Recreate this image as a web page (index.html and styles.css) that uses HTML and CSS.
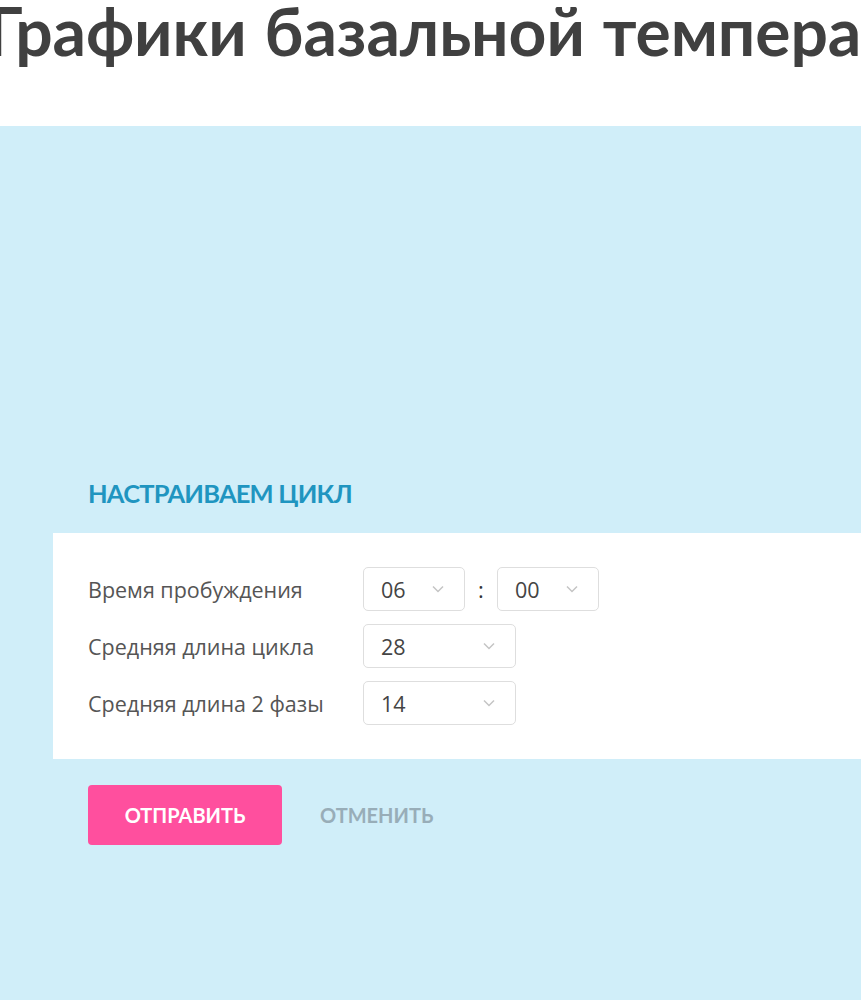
FILE: index.html
```html
<!DOCTYPE html>
<html lang="ru">
<head>
    <meta charset="UTF-8">
    <meta name="viewport" content="width=device-width, initial-scale=1.0">
    <title>Графики базальной температуры</title>
    <link rel="stylesheet" href="styles.css">
</head>
<body>
    <header class="page-head">
        <h1>Графики базальной температуры</h1>
    </header>

    <main class="cycle">
        <h2 class="cycle-title">НАСТРАИВАЕМ ЦИКЛ</h2>

        <div class="panel">
            <div class="row">
                <span class="label">Время пробуждения</span>
                <div class="pick short">
                    <span>06</span>
                    <svg width="12" height="8" viewBox="0 0 12 8"><path d="M1 1.5l5 5 5-5" /></svg>
                </div>
                <span class="colon">:</span>
                <div class="pick short">
                    <span>00</span>
                    <svg width="12" height="8" viewBox="0 0 12 8"><path d="M1 1.5l5 5 5-5" /></svg>
                </div>
            </div>
            <div class="row">
                <span class="label">Средняя длина цикла</span>
                <div class="pick">
                    <span>28</span>
                    <svg width="12" height="8" viewBox="0 0 12 8"><path d="M1 1.5l5 5 5-5" /></svg>
                </div>
            </div>
            <div class="row">
                <span class="label">Средняя длина 2 фазы</span>
                <div class="pick">
                    <span>14</span>
                    <svg width="12" height="8" viewBox="0 0 12 8"><path d="M1 1.5l5 5 5-5" /></svg>
                </div>
            </div>
        </div>

        <div class="actions">
            <button class="btn-send">ОТПРАВИТЬ</button>
            <button class="btn-cancel">ОТМЕНИТЬ</button>
        </div>
    </main>
</body>
</html>
```

FILE: styles.css
```css
body {
    margin: 0;
    font-family: "Open Sans", "DejaVu Sans", sans-serif;
    color: #444;
    background-color: #d0eef9;
    overflow: hidden;
}

.page-head {
    background-color: #fff;
    height: 126px;
    overflow: hidden;
}

.page-head h1 {
    margin: 0;
    font-family: Lato, "Liberation Sans", sans-serif;
    font-size: 66px;
    line-height: 62px;
    letter-spacing: -0.1px;
    word-spacing: 2px;
    font-weight: bold;
    color: #404040;
    white-space: nowrap;
    text-indent: -13px;
}

.cycle {
    padding-top: 349px;
    height: 525px;
}

.cycle-title {
    margin: 0 0 22px 88px;
    font-family: Lato, "Liberation Sans", sans-serif;
    font-size: 25.5px;
    line-height: 36px;
    letter-spacing: -0.8px;
    color: #1f95c0;
}

.panel {
    margin-left: 53px;
    background-color: #fff;
    padding: 34px 35px;
    display: flex;
    flex-direction: column;
    gap: 13px;
}

.row {
    display: flex;
    align-items: center;
}

.label {
    width: 275px;
    font-size: 21.5px;
    color: #555;
}

.pick {
    width: 153px;
    height: 44px;
    box-sizing: border-box;
    border: 1px solid #dedede;
    border-radius: 5px;
    display: flex;
    align-items: center;
    justify-content: space-between;
    padding: 0 20px 0 17px;
    font-size: 21.5px;
    color: #444;
}

.pick.short {
    width: 102px;
}

.pick svg path {
    fill: none;
    stroke: #c4c4c4;
    stroke-width: 1.5;
}

.colon {
    width: 32px;
    text-align: center;
    font-size: 22px;
    color: #333;
}

.actions {
    margin: 26px 0 0 88px;
    display: flex;
    align-items: center;
    gap: 38px;
}

.actions button {
    font-family: Lato, "Liberation Sans", sans-serif;
    font-weight: bold;
    font-size: 20px;
    border: none;
    cursor: pointer;
}

.btn-send {
    width: 194px;
    height: 60px;
    border-radius: 4px;
    background-color: #ff4f9e;
    color: #fff;
}

.btn-cancel {
    background: none;
    color: #98adb8;
    padding: 0;
}
```
